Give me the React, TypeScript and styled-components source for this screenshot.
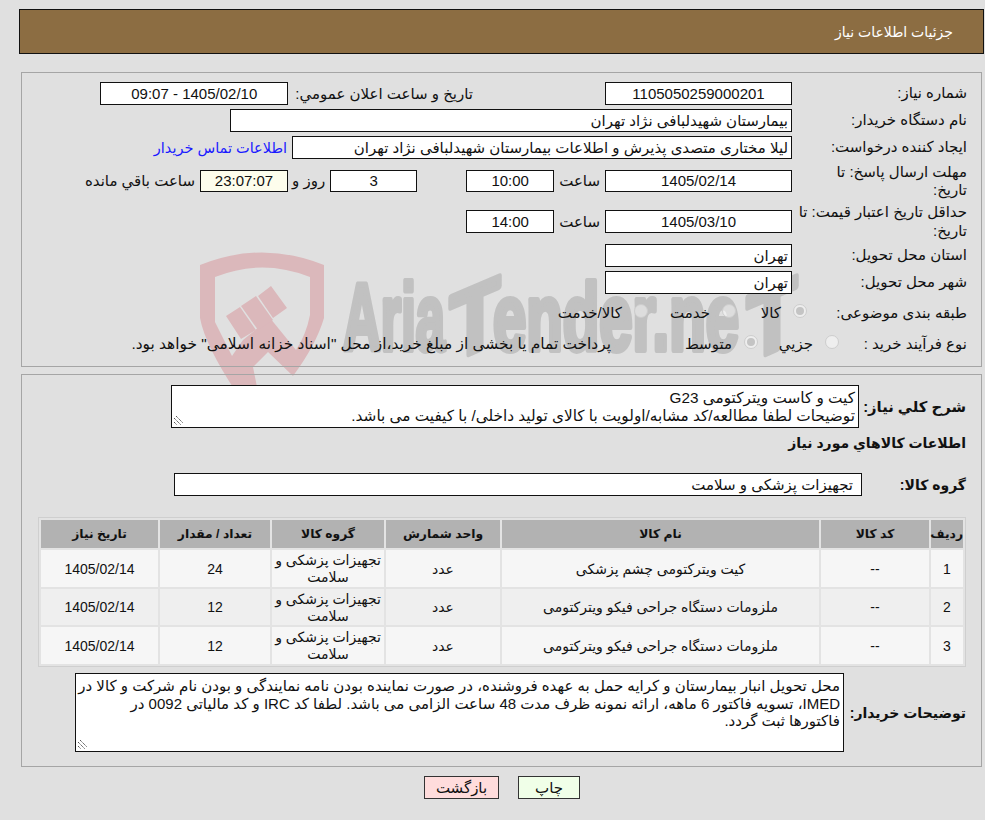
import React from "react";
import styled, { createGlobalStyle } from "styled-components";

const Global = createGlobalStyle`
  html, body { margin: 0; padding: 0; background: #e0e0e0; }
  body { font-family: "Liberation Sans", "DejaVu Sans", sans-serif; font-size: 15px; color: #111; }
`;
const Page = styled.div`
  width: 985px; height: 820px; box-sizing: border-box; padding-top: 9px; direction: rtl; position: relative; overflow: hidden;
`;
const Header = styled.div`
  width: 965px; height: 45px; box-sizing: border-box; margin-right: 1px; background: #8c6d42; border: 1px solid #111; color: #fff;
  padding: 12px 30px 0 0; line-height: 20px; font-size: 14px;
`;
const Panel = styled.div<{ $h: number; $top: number }>`
  width: 961px; box-sizing: border-box; margin: ${(p) => p.$top}px 3px 0 0; border: 1px solid #a5a5a5; position: relative; z-index: 1;
  height: ${(p) => p.$h}px;
`;
const Watermark = styled.svg`
  position: absolute; left: 0; top: 0; width: 985px; height: 420px; pointer-events: none;
`;
const Form = styled.div`
  display: grid; grid-template-columns: 189px 1fr; padding-top: 7px;
`;
const Label = styled.div<{ $h?: number }>`
  padding-right: 14px; height: ${(p) => p.$h ?? 27}px; line-height: 18.5px; display: flex; align-items: center;
`;
const Cells = styled.div<{ $h?: number; $pull?: number; $gap?: number }>`
  display: flex; align-items: center; height: ${(p) => p.$h ?? 27}px; gap: ${(p) => p.$gap ?? 5}px; white-space: nowrap;
  margin-right: ${(p) => p.$pull ?? 0}px;
`;
const Field = styled.div<{ $w: number; $center?: boolean; $bg?: string; $push?: number; $short?: boolean }>`
  width: ${(p) => p.$w}px; height: ${(p) => (p.$short ? 22 : 23)}px; box-sizing: border-box; border: 1px solid #111; background: ${(p) => p.$bg ?? "#fff"};
  line-height: ${(p) => (p.$short ? 20 : 21)}px; padding: 0 3px; text-align: ${(p) => (p.$center ? "center" : "right")}; overflow: hidden; white-space: nowrap; flex: none;
  margin-right: ${(p) => p.$push ?? 0}px;
`;
const Text = styled.span<{ $push?: number; $size?: number }>`
  margin-right: ${(p) => p.$push ?? 0}px; flex: none; font-size: ${(p) => p.$size ?? 15}px;
`;
const LinkText = styled.span`
  color: #1a1aff; flex: none; font-size: 14.5px;
`;
const RadioDot = styled.span<{ $on?: boolean }>`
  width: 14px; height: 14px; border-radius: 50%; box-sizing: border-box; border: 1px solid #cdcdcd; background: rgba(255, 255, 255, 0.45); flex: none; position: relative; top: -2px;
  display: flex; align-items: center; justify-content: center;
  &::after { content: ""; width: 8px; height: 8px; border-radius: 50%; background: ${(p) => (p.$on ? "#c4c4c4" : "transparent")}; }
`;
const RadioItem = styled.span<{ $w: number }>`
  display: flex; align-items: center; gap: 12px; width: ${(p) => p.$w}px; flex: none;
`;
const DescRow = styled.div`
  display: flex; padding-top: 10px;
`;
const BoldLabel = styled.div<{ $w: number; $size?: number }>`
  font-weight: bold; width: ${(p) => p.$w}px; box-sizing: border-box; padding-right: 15px; flex: none; font-size: ${(p) => p.$size ?? 14}px; white-space: nowrap; align-self: center;
`;
const TextBox = styled.div<{ $w: number; $h: number; $size?: number }>`
  width: ${(p) => p.$w}px; height: ${(p) => p.$h}px; box-sizing: border-box; border: 1px solid #111; background: #fff; padding: 3px 3px 0; line-height: 17.5px; position: relative; flex: none; overflow: hidden; white-space: nowrap;
  font-size: ${(p) => p.$size ?? 15}px;
`;
const Grip = styled.svg`
  position: absolute; left: 1px; bottom: 1px; width: 11px; height: 11px;
`;
const Heading = styled.div`
  font-weight: bold; font-size: 14px; padding: 4px 15px 0 0; height: 22px; line-height: 22px;
`;
const GroupRow = styled.div`
  display: flex; align-items: center; margin-top: 19px; height: 23px;
`;
const GroupField = styled(Field)`
  padding-right: 8px;
`;
const Table = styled.table`
  border-collapse: separate; border-spacing: 2px; width: 928px; margin: 21px 15px 0 0; table-layout: fixed; background: #e3e3e3; border: 1px solid #cfcfcf; text-align: center; font-size: 14px;
`;
const Th = styled.th`
  background: #b2b2b2; height: 28px; padding: 0; font-weight: bold; font-size: 12.3px;
`;
const Td = styled.td<{ $alt?: boolean; $h: number }>`
  background: ${(p) => (p.$alt ? "#efefef" : "#f6f6f6")}; height: ${(p) => p.$h - 1}px; padding: 1px 2px 0; line-height: 17px;
`;
const NoteRow = styled.div`
  display: flex; margin-top: 6px;
`;
const Buttons = styled.div`
  display: flex; justify-content: center; gap: 19px; margin-top: 9px; width: 966px;
`;
const Btn = styled.button<{ $bg: string; $w: number }>`
  width: ${(p) => p.$w}px; height: 23px; box-sizing: border-box; border: 1px solid #333; background: ${(p) => p.$bg}; font: inherit; color: #111; padding: 0;
`;

const grip = (
  <Grip viewBox="0 0 11 11"><path d="M1 3l7 7M1 7l3 3M3 1l7 7" stroke="#555" strokeWidth="1" fill="none" strokeDasharray="1.4 .6" /></Grip>
);

const logoText = {
  fontFamily: "'Liberation Sans', sans-serif", fontWeight: 700, fontSize: 94, fill: "#c1c1c1",
  stroke: "#c1c1c1", strokeWidth: 6, strokeLinejoin: "round" as const, direction: "ltr" as const,
};

const rows = [
  { n: "1", name: "کیت ویترکتومی چشم پزشکی", qty: "24", alt: false, h: 37 },
  { n: "2", name: "ملزومات دستگاه جراحی فیکو ویترکتومی", qty: "12", alt: true, h: 36 },
  { n: "3", name: "ملزومات دستگاه جراحی فیکو ویترکتومی", qty: "12", alt: false, h: 37 },
];

export default function App() {
  return (
    <Page>
      <Global />
      <Watermark viewBox="0 0 985 420">
        <path fillRule="evenodd" fill="#dbb8bb" d="M200 265Q262 240 324 265V318Q316 345 293 376L268 352L253 367L258 392L236 392Q205 345 200 318Z M215 277Q262 258 310 277V315Q306 335 296 350L270 318L243 340L232 356L215 322Z" />
        <path fill="#dbb8bb" d="M226 316L240 307L256 330L241 339Z M241 306L256 296L273 320L258 330Z M258 296L271 286L287 308L273 318Z" />
        <text x="343" y="350" textLength="102" lengthAdjust="spacingAndGlyphs" {...logoText}>Aria</text>
        <text transform="translate(450 362) skewY(-23)" textLength="50" lengthAdjust="spacingAndGlyphs" {...logoText}>T</text>
        <text x="493" y="350" textLength="246" lengthAdjust="spacingAndGlyphs" {...logoText}>ender.ne</text>
        <text transform="translate(747 362) skewY(-23)" textLength="50" lengthAdjust="spacingAndGlyphs" {...logoText}>T</text>
      </Watermark>
      <Header>جزئیات اطلاعات نیاز</Header>
      <Panel $h={295} $top={18}>
        <Form>
          <Label>شماره نیاز:</Label>
          <Cells>
            <Field $w={187} $center>1105050259000201</Field>
            <Text $push={127}>تاریخ و ساعت اعلان عمومي:</Text>
            <Field $w={188} $center $push={2}>1405/02/10 - 09:07</Field>
          </Cells>
          <Label>نام دستگاه خریدار:</Label>
          <Cells><Field $w={562}>بیمارستان شهیدلبافی نژاد تهران</Field></Cells>
          <Label>ایجاد کننده درخواست:</Label>
          <Cells>
            <Field $w={500}>لیلا مختاری متصدی پذیرش و اطلاعات بیمارستان شهیدلبافی نژاد تهران</Field>
            <LinkText>اطلاعات تماس خریدار</LinkText>
          </Cells>
          <Label $h={40}><span>مهلت ارسال پاسخ: تا<br />تاریخ:</span></Label>
          <Cells $h={40}>
            <Field $w={187} $center $short>1405/02/14</Field>
            <Text>ساعت</Text>
            <Field $w={88} $center $short>10:00</Field>
            <Field $w={87} $center $short $push={44}>3</Field>
            <Text>روز و</Text>
            <Field $w={88} $center $short $bg="#fdfdec" $push={-1}>23:07:07</Field>
            <Text>ساعت باقي مانده</Text>
          </Cells>
          <Label $h={41}>حداقل تاریخ اعتبار قیمت: تا تاریخ:</Label>
          <Cells $h={41}>
            <Field $w={187} $center>1405/03/10</Field>
            <Text>ساعت</Text>
            <Field $w={88} $center>14:00</Field>
          </Cells>
          <Label>استان محل تحویل:</Label>
          <Cells><Field $w={187}>تهران</Field></Cells>
          <Label>شهر محل تحویل:</Label>
          <Cells><Field $w={187}>تهران</Field></Cells>
          <Label $h={34}>طبقه بندی موضوعی:</Label>
          <Cells $h={34} $gap={0} $pull={-15}>
            <RadioItem $w={71}><RadioDot $on />کالا</RadioItem>
            <RadioItem $w={88}><RadioDot />خدمت</RadioItem>
            <RadioItem $w={120}><RadioDot />کالا/خدمت</RadioItem>
          </Cells>
          <Label $h={28}>نوع فرآیند خرید :</Label>
          <Cells $h={28} $gap={0} $pull={-47}>
            <RadioItem $w={81}><RadioDot />جزیي</RadioItem>
            <RadioItem $w={147}><RadioDot $on />متوسط</RadioItem>
            <Text $size={15.4}>پرداخت تمام یا بخشی از مبلغ خرید،از محل "اسناد خزانه اسلامی" خواهد بود.</Text>
          </Cells>
        </Form>
      </Panel>
      <Panel $h={393} $top={7}>
        <DescRow>
          <BoldLabel $w={122} $size={14.8}>شرح کلي نیاز:</BoldLabel>
          <TextBox $w={688} $h={43} $size={15.3}>
            کیت و کاست ویترکتومی G23<br />
            توضیحات لطفا مطالعه/کد مشابه/اولویت با کالای تولید داخلی/ با کیفیت می باشد.
            {grip}
          </TextBox>
        </DescRow>
        <Heading>اطلاعات کالاهاي مورد نیاز</Heading>
        <GroupRow>
          <BoldLabel $w={119}>گروه کالا:</BoldLabel>
          <GroupField $w={688}>تجهیزات پزشکی و سلامت</GroupField>
        </GroupRow>
        <Table>
          <colgroup>
            <col style={{ width: 32 }} /><col style={{ width: 108 }} /><col style={{ width: 317 }} /><col style={{ width: 114 }} /><col style={{ width: 112 }} /><col style={{ width: 110 }} /><col style={{ width: 117 }} />
          </colgroup>
          <thead>
            <tr>
              <Th>ردیف</Th><Th>کد کالا</Th><Th>نام کالا</Th><Th>واحد شمارش</Th><Th>گروه کالا</Th><Th>تعداد / مقدار</Th><Th>تاریخ نیاز</Th>
            </tr>
          </thead>
          <tbody>
            {rows.map((r) => (
              <tr key={r.n}>
                <Td $h={r.h} $alt={r.alt}>{r.n}</Td>
                <Td $h={r.h} $alt={r.alt}>--</Td>
                <Td $h={r.h} $alt={r.alt}>{r.name}</Td>
                <Td $h={r.h} $alt={r.alt}>عدد</Td>
                <Td $h={r.h} $alt={r.alt}>تجهیزات پزشکی و سلامت</Td>
                <Td $h={r.h} $alt={r.alt}>{r.qty}</Td>
                <Td $h={r.h} $alt={r.alt}>1405/02/14</Td>
              </tr>
            ))}
          </tbody>
        </Table>
        <NoteRow>
          <BoldLabel $w={137}>توضیحات خریدار:</BoldLabel>
          <TextBox $w={769} $h={79}>
            محل تحویل انبار بیمارستان و کرایه حمل به عهده فروشنده، در صورت نماینده بودن نامه نمایندگی و بودن نام شرکت و کالا در<br />
            IMED، تسویه فاکتور 6 ماهه، ارائه نمونه ظرف مدت 48 ساعت الزامی می باشد. لطفا کد IRC و کد مالیاتی 0092 در<br />
            فاکتورها ثبت گردد.
            {grip}
          </TextBox>
        </NoteRow>
      </Panel>
      <Buttons>
        <Btn $bg="#f0ffe8" $w={62}>چاپ</Btn>
        <Btn $bg="#ffdcdc" $w={75}>بازگشت</Btn>
      </Buttons>
    </Page>
  );
}
